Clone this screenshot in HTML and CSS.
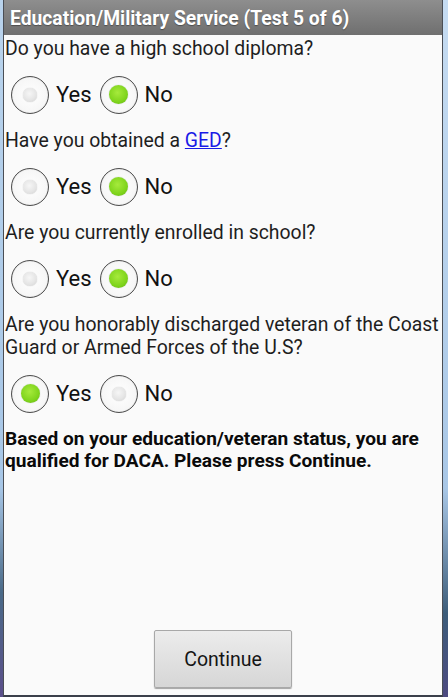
FILE: index.html
```html
<!DOCTYPE html>
<html>
<head>
<meta charset="utf-8">
<link rel="stylesheet" href="styles.css">
</head>
<body>
<div class="frame-left"></div>
<div class="app">
  <div class="titlebar">Education/Military Service (Test 5 of 6)</div>
  <div class="content">
    <div class="question">Do you have a high school diploma?</div>
    <div class="radios">
      <div class="radio"><span class="ring"><span class="dot off"></span></span><span class="label">Yes</span></div>
      <div class="radio"><span class="ring"><span class="dot on"></span></span><span class="label">No</span></div>
    </div>
    <div class="question">Have you obtained a <a class="link" href="#">GED</a>?</div>
    <div class="radios">
      <div class="radio"><span class="ring"><span class="dot off"></span></span><span class="label">Yes</span></div>
      <div class="radio"><span class="ring"><span class="dot on"></span></span><span class="label">No</span></div>
    </div>
    <div class="question">Are you currently enrolled in school?</div>
    <div class="radios">
      <div class="radio"><span class="ring"><span class="dot off"></span></span><span class="label">Yes</span></div>
      <div class="radio"><span class="ring"><span class="dot on"></span></span><span class="label">No</span></div>
    </div>
    <div class="question">Are you honorably discharged veteran of the Coast<br>Guard or Armed Forces of the U.S?</div>
    <div class="radios">
      <div class="radio"><span class="ring"><span class="dot on"></span></span><span class="label">Yes</span></div>
      <div class="radio"><span class="ring"><span class="dot off"></span></span><span class="label">No</span></div>
    </div>
    <div class="result">Based on your education/veteran status, you are<br>qualified for DACA. Please press Continue.</div>
  </div>
  <div class="footer">
    <button class="btn">Continue</button>
  </div>
</div>
<div class="frame-right"></div>
</body>
</html>
```

FILE: styles.css
```css
html, body {
  margin: 0;
  padding: 0;
  height: 697px;
  overflow: hidden;
}
body {
  display: flex;
  background: #2a3550;
  font-family: Roboto, "Noto Sans", sans-serif;
}
.frame-left {
  width: 3px;
  background: linear-gradient(to bottom, #b9d3ec 0%, #a7c6e6 70%, #4a6a88 85%, #5b4f8a 100%);
}
.frame-right {
  width: 5px;
  background: linear-gradient(to bottom, #c6dcf2 0%, #a9c7e6 70%, #3d5d7a 88%, #4d4a80 100%);
}
.app {
  width: 438px;
  height: 695px;
  border-left: 1px solid #4a4e55;
  border-right: 1px solid #4a4e55;
  border-bottom: 2px solid #3b3f4a;
  background: #fafafa;
  display: flex;
  flex-direction: column;
}
.titlebar {
  height: 35px;
  box-sizing: border-box;
  padding-left: 6px;
  background: linear-gradient(to bottom, #8e8e8e, #6f6f6f);
  color: #ffffff;
  font-weight: bold;
  font-size: 19.3px;
  line-height: 37px;
  white-space: nowrap;
  text-shadow: 0 1px 1px rgba(0,0,0,0.35);
}
.content {
  padding-left: 1px;
  padding-top: 2px;
}
.question {
  font-size: 19.4px;
  line-height: 23px;
  color: #1e1e1e;
  white-space: nowrap;
}
.link {
  color: #1a1ae6;
  text-decoration: underline;
}
.radios {
  height: 69px;
  display: flex;
  align-items: center;
  padding-left: 6px;
}
.radio {
  display: flex;
  align-items: center;
  margin-right: 8px;
}
.ring {
  width: 36px;
  height: 36px;
  border: 1.6px solid #4e4e4e;
  border-radius: 50%;
  background: radial-gradient(circle at 50% 50%, #ffffff 0%, #f6f6f6 70%, #e8e8e8 100%);
  display: flex;
  align-items: center;
  justify-content: center;
  box-shadow: inset 0 0 1px rgba(0,0,0,0.3);
}
.dot {
  border-radius: 50%;
}
.dot.off {
  width: 14px;
  height: 14px;
  background: radial-gradient(circle at 45% 40%, #f6f6f6 0%, #e4e4e4 60%, #cccccc 100%);
  box-shadow: 0 0 1px rgba(0,0,0,0.3);
}
.dot.on {
  width: 19px;
  height: 19px;
  background: radial-gradient(circle at 45% 40%, #a6ea3c 0%, #7fd41c 60%, #5fb010 100%);
  box-shadow: 0 0 1px rgba(0,60,0,0.4);
}
.label {
  font-size: 22px;
  color: #111;
  margin-left: 7px;
}
.result {
  font-size: 19.1px;
  font-weight: bold;
  line-height: 22px;
  color: #0a0a0a;
  white-space: nowrap;
}
.footer {
  margin-top: auto;
  display: flex;
  justify-content: center;
  padding-bottom: 7px;
}
.btn {
  width: 138px;
  height: 58px;
  border: 1px solid #a8a8a8;
  border-radius: 2px;
  background: linear-gradient(to bottom, #ececec, #d6d6d6);
  box-shadow: 0 1px 1px rgba(0,0,0,0.35);
  font-family: Roboto, "Noto Sans", sans-serif;
  font-size: 19.5px;
  color: #151515;
  padding: 0;
}
```
